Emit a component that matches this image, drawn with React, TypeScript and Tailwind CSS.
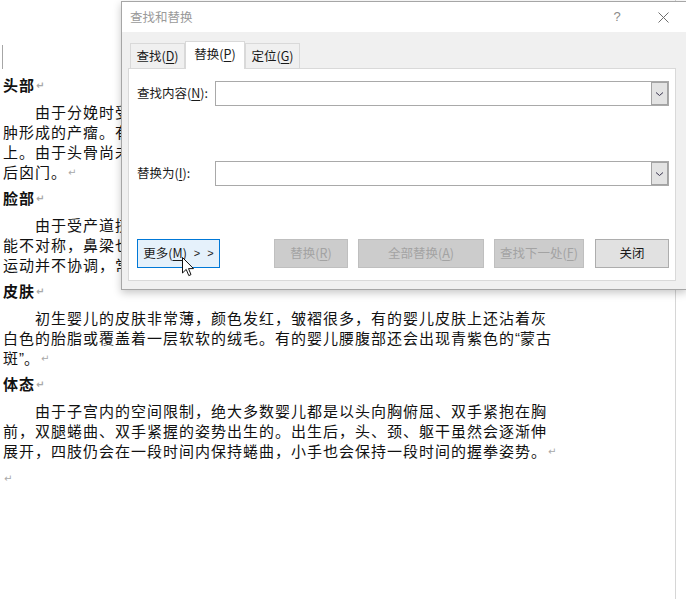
import React from 'react'

const cjk = "font-['Noto_Sans_CJK_SC','Noto_Sans',sans-serif]"

function Mark() {
    return <span className="ml-[1px] inline-block h-[20px] align-top font-['DejaVu_Sans',sans-serif] text-[10px] leading-[22px] tracking-normal text-[#a8a8a8]">↵</span>
}

function Q({ c }: { c: string }) {
    return <span className="font-['Liberation_Sans',sans-serif] tracking-normal">{c}</span>
}

function Heading({ text }: { text: string }) {
    return (
        <div className="mt-[6px] mb-[7px] flex h-[20px] items-center font-bold whitespace-nowrap">
            {text}
            <Mark />
        </div>
    )
}

function Para({ lines }: { lines: React.ReactNode[] }) {
    return (
        <div>
            {lines.map((line, i) => (
                <div key={i} className={`flex h-[20px] items-center whitespace-nowrap ${i === 0 ? 'pl-[32px]' : ''}`}>
                    {line}
                    {i === lines.length - 1 && <Mark />}
                </div>
            ))}
        </div>
    )
}

function U({ children }: { children: React.ReactNode }) {
    return <span className="underline underline-offset-2">{children}</span>
}

function Combo() {
    return (
        <div className="flex h-[25px] flex-1 border border-[#a9a9a9] bg-white">
            <div className="flex-1" />
            <div className="flex w-[17px] items-center justify-center border border-[#a3a3a3] bg-[#e3e3e3]">
                <svg width="9" height="6" viewBox="0 0 9 6">
                    <path d="M1 1.5 L4.5 4.5 L8 1.5" fill="none" stroke="#3a3550" strokeWidth="1" />
                </svg>
            </div>
        </div>
    )
}

function Btn({ w, ml, disabled, children }: { w: string; ml?: string; disabled?: boolean; children: React.ReactNode }) {
    return (
        <div
            className={`flex h-[29px] items-center justify-center border ${w} ${ml ?? ''} ${disabled
                ? 'border-[#bfbfbf] bg-[#cccccc] text-[#a3a3a3]'
                : 'border-[#adadad] bg-[#e1e1e1] text-[#1a1a1a]'
                }`}
        >
            {children}
        </div>
    )
}

export default function App() {
    return (
        <div className="relative h-[599px] w-[686px] overflow-hidden bg-white">
            {/* document */}
            <div className={`${cjk} pt-[45px] pl-[3px] text-[15px] tracking-[1px] text-[#111]`}>
                <div className="h-[24px] w-[1px] -ml-[1px] bg-[#a6a6a6]" />
                <Heading text="头部" />
                <Para
                    lines={[
                        '由于分娩时受到产道的挤压，有的婴儿头部会变长，或出现因头皮水',
                        '肿形成的产瘤。有的婴儿头部还会有一个软软的肿块，多在头顶的一侧',
                        '上。由于头骨尚未完全闭合，婴儿头顶会有两个软软的部位，称为前囟门和',
                        '后囟门。',
                    ]}
                />
                <Heading text="脸部" />
                <Para
                    lines={[
                        '由于受产道挤压，婴儿的脸可能会有些浮肿，眼睑也较肿，两眼可',
                        '能不对称，鼻梁也比较扁平。婴儿的两眼常常会出现斜视，眼球的',
                        '运动并不协调，常常是一只眼睛看这里，另一只眼睛看那里。',
                    ]}
                />
                <Heading text="皮肤" />
                <Para
                    lines={[
                        '初生婴儿的皮肤非常薄，颜色发红，皱褶很多，有的婴儿皮肤上还沾着灰',
                        <>白色的胎脂或覆盖着一层软软的绒毛。有的婴儿腰腹部还会出现青紫色的<Q c="“" />蒙古</>,
                        <>斑<Q c="”" />。</>,
                    ]}
                />
                <Heading text="体态" />
                <Para
                    lines={[
                        '由于子宫内的空间限制，绝大多数婴儿都是以头向胸俯屈、双手紧抱在胸',
                        '前，双腿蜷曲、双手紧握的姿势出生的。出生后，头、颈、躯干虽然会逐渐伸',
                        '展开，四肢仍会在一段时间内保持蜷曲，小手也会保持一段时间的握拳姿势。',
                    ]}
                />
                <div className="mt-[7px] flex h-[20px] items-center">
                    <Mark />
                </div>
            </div>

            {/* page edge behind the dialog */}
            <div className="absolute left-[675px] top-0 h-[599px] w-[1px] bg-[#d6d6d6]" />

            {/* find and replace dialog */}
            <div className={`${cjk} absolute left-[121px] top-[1px] h-[289px] w-[566px] border border-[#a6a6a6] bg-[#f0f0f0] text-[12.5px] text-[#1a1a1a] shadow-[0_3px_8px_rgba(0,0,0,0.22)]`}>
                <div className="flex h-[30px] items-center bg-white">
                    <span className="pl-[8px] text-[#9a9a9a]">查找和替换</span>
                    <div className="ml-auto flex h-full">
                        <div className="flex w-[46px] items-center justify-center text-[13px] text-[#8a8a8a] font-['Liberation_Sans',sans-serif]">?</div>
                        <div className="flex w-[46px] items-center justify-center">
                            <svg width="11" height="11" viewBox="0 0 11 11">
                                <path d="M0.5 0.5 L10.5 10.5 M10.5 0.5 L0.5 10.5" stroke="#6e6e6e" strokeWidth="1" />
                            </svg>
                        </div>
                    </div>
                </div>

                <div className="flex items-end pl-[8px] pt-[9px]">
                    <div className="flex h-[25px] w-[55px] items-center justify-center border border-b-0 border-[#d9d9d9]">
                        查找(<U>D</U>)
                    </div>
                    <div className="relative z-10 -mb-px flex h-[28px] w-[60px] items-center justify-center border border-b-0 border-[#d9d9d9] bg-white pb-[2px]">
                        替换(<U>P</U>)
                    </div>
                    <div className="flex h-[25px] w-[55px] items-center justify-center border border-b-0 border-[#d9d9d9]">
                        定位(<U>G</U>)
                    </div>
                </div>

                <div className="ml-[6px] h-[213px] w-[548px] border border-[#d9d9d9] bg-white pl-[8px] pr-[6px] pt-[12px]">
                    <div className="flex items-center">
                        <div className="w-[78px] whitespace-nowrap">查找内容(<U>N</U>):</div>
                        <Combo />
                    </div>
                    <div className="mt-[55px] flex items-center">
                        <div className="w-[78px] whitespace-nowrap">替换为(<U>I</U>):</div>
                        <Combo />
                    </div>
                    <div className="mt-[53px] flex">
                        <div className="flex h-[29px] w-[83px] items-center justify-center border border-[#0078d7] bg-[#e5f1fb] pl-[2px]">
                            更多(<U>M</U>)<span className="ml-[7px] font-['Liberation_Sans',sans-serif] text-[11px] tracking-[2px]">&gt; &gt;</span>
                        </div>
                        <Btn w="w-[74px]" ml="ml-[54px]" disabled>替换(<U>R</U>)</Btn>
                        <Btn w="w-[126px]" ml="ml-[10px]" disabled>全部替换(<U>A</U>)</Btn>
                        <Btn w="w-[90px]" ml="ml-[10px]" disabled>查找下一处(<U>F</U>)</Btn>
                        <Btn w="w-[74px]" ml="ml-[11px]">关闭</Btn>
                    </div>
                </div>
            </div>

            {/* mouse pointer */}
            <svg className="absolute left-[182px] top-[257px]" width="13" height="21" viewBox="0 0 13 21">
                <path d="M0.5 0.5 L0.5 16 L4.2 12.4 L6.8 18.6 L9 17.6 L6.5 11.6 L11.5 11.6 Z" fill="white" stroke="#111" strokeWidth="1" strokeLinejoin="miter" />
            </svg>
        </div>
    )
}
